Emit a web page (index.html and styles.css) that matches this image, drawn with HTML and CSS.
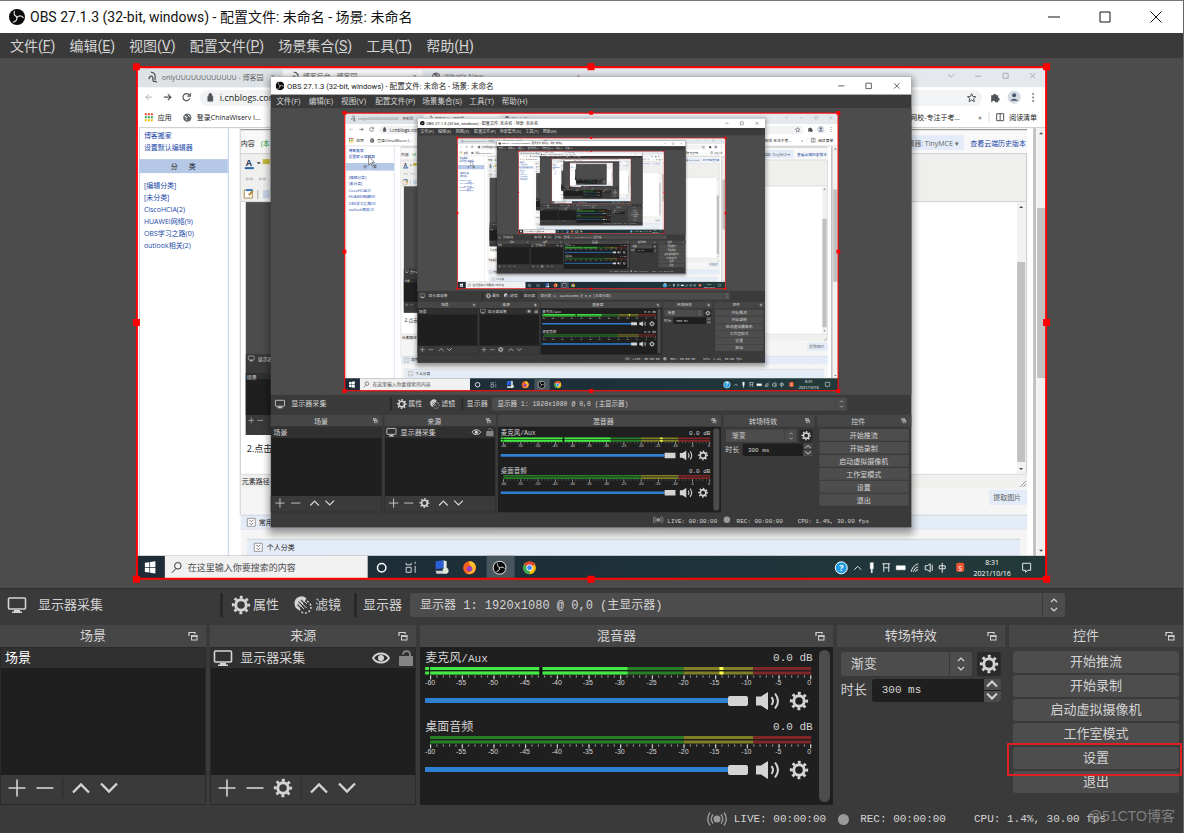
FILE: index.html
```html
<!DOCTYPE html>
<html lang="zh-CN">
<head>
<meta charset="utf-8">
<title>OBS 27.1.3 (32-bit, windows)</title>
<link rel="stylesheet" href="styles.css">
</head>
<body>
<svg class="defs" aria-hidden="true">
  <defs>
    <symbol id="i-obs" viewBox="0 0 24 24">
      <circle cx="12" cy="12" r="12" fill="#0b0b0b"/>
      <g fill="none" stroke="#e0e0e0" stroke-width="1.700" stroke-linecap="round">
        <path d="M8 3.5c-1 4 .5 7 4.300 8.200"/>
        <path d="M8 3.5c-1 4 .5 7 4.300 8.200" transform="rotate(120 12 12)"/>
        <path d="M8 3.5c-1 4 .5 7 4.300 8.200" transform="rotate(240 12 12)"/>
      </g>
    </symbol>
    <symbol id="i-gear" viewBox="0 0 24 24">
      <circle cx="12" cy="12" r="6.300" fill="none" stroke="currentColor" stroke-width="3.600"/>
      <circle cx="12" cy="12" r="9.200" fill="none" stroke="currentColor" stroke-width="3.600" stroke-dasharray="3.300 3.926" transform="rotate(-10 12 12)"/>
    </symbol>
    <symbol id="i-monitor" viewBox="0 0 20 18">
      <rect x="1.500" y="2" width="17" height="11" rx="1" fill="none" stroke="currentColor" stroke-width="1.600"/>
      <path d="M7 14h6v1.500h2V17H5v-1.500h2z" fill="currentColor"/>
    </symbol>
    <symbol id="i-filter" viewBox="0 0 20 20">
      <path d="M1.500 9a7 7 0 0 1 12-5.500L6 15a7 7 0 0 1-4.500-6z" fill="currentColor"/>
      <circle cx="12" cy="12" r="6" fill="none" stroke="currentColor" stroke-width="1.600" stroke-dasharray="1.800 1.900"/>
      <path d="M5.500 6.500l7 7M8 5l7 7M4.500 9.500l5 5" stroke="#3a3a3a" stroke-width="1.100"/>
      <path d="M6.500 6l7 7M5 8l6 6M10 5l4 4" stroke="currentColor" stroke-width="1"/>
    </symbol>
    <symbol id="i-plus" viewBox="0 0 20 20"><path d="M10 1.500v17M1.500 10h17" stroke="currentColor" stroke-width="1.600"/></symbol>
    <symbol id="i-minus" viewBox="0 0 20 20"><path d="M1.500 10h17" stroke="currentColor" stroke-width="1.600"/></symbol>
    <symbol id="i-up" viewBox="0 0 20 20"><path d="M2 14.500l8-8 8 8" fill="none" stroke="currentColor" stroke-width="2.400"/></symbol>
    <symbol id="i-down" viewBox="0 0 20 20"><path d="M2 5.500l8 8 8-8" fill="none" stroke="currentColor" stroke-width="2.400"/></symbol>
    <symbol id="i-updown" viewBox="0 0 10 16"><path d="M2 5l3-3 3 3M2 11l3 3 3-3" fill="none" stroke="currentColor" stroke-width="1.200"/></symbol>
    <symbol id="i-float" viewBox="0 0 10 10">
      <path d="M1 5V1.500h6V3M1 1.500h6" fill="none" stroke="currentColor" stroke-width="1.200"/>
      <rect x="3.500" y="5" width="5.500" height="4" fill="none" stroke="currentColor"/>
      <path d="M3 5h6.500" stroke="currentColor" stroke-width="1.600"/>
    </symbol>
    <symbol id="i-eye" viewBox="0 0 18 12">
      <path d="M1 6c3.500-6 12.500-6 16 0-3.500 6-12.500 6-16 0z" fill="none" stroke="currentColor" stroke-width="1.800"/>
      <circle cx="9" cy="6" r="3" fill="currentColor"/>
    </symbol>
    <symbol id="i-lock" viewBox="0 0 14 16">
      <rect x="0" y="6" width="14" height="10" rx="1" fill="currentColor"/>
      <path d="M4 4.500c0-4.500 7-4.500 7 0V8" fill="none" stroke="currentColor" stroke-width="1.800"/>
    </symbol>
    <symbol id="i-speaker" viewBox="0 0 26 20">
      <path d="M1 5.500h5L13 1v18l-7-4.500H1z" fill="currentColor"/>
      <path d="M16.500 6q3 4 0 8M20 2.500q6 7.500 0 15" fill="none" stroke="currentColor" stroke-width="2"/>
    </symbol>
    <symbol id="i-live" viewBox="0 0 20 16">
      <circle cx="10" cy="8" r="3.500" fill="currentColor"/>
      <path d="M6 3.500q-3.500 4.500 0 9M14 3.500q3.500 4.500 0 9M3 1.500q-4.500 6.500 0 13M17 1.500q4.500 6.500 0 13" fill="none" stroke="currentColor" stroke-width="1.400"/>
    </symbol>
    <symbol id="i-chrome" viewBox="0 0 24 24">
      <circle cx="12" cy="12" r="11" fill="#fbbc05"/>
      <path d="M12 12L2.500 6.500A11 11 0 0 1 21.500 6.500z" fill="#ea4335"/>
      <path d="M12 12L2.500 6.500A11 11 0 0 0 12 23z" fill="#34a853"/>
      <circle cx="12" cy="12" r="5.500" fill="#fff"/><circle cx="12" cy="12" r="4.200" fill="#4285f4"/>
    </symbol>
    <symbol id="i-globe" viewBox="0 0 12 12">
      <circle cx="6" cy="6" r="5.500" fill="#5f6368"/><path d="M2 4l3 1-1 2 2 2M7 2l1 2 2 1" fill="none" stroke="#fff" stroke-width="1.200"/>
    </symbol>
    <linearGradient id="taskbar"><stop offset="0" stop-color="#1f2c38"/><stop offset=".5" stop-color="#1d303a"/><stop offset="1" stop-color="#233a3a"/></linearGradient>
    <filter id="soft" x="-10%" y="-10%" width="120%" height="120%"><feGaussianBlur stdDeviation="7"/></filter>

    <g id="meter">
      <path d="M5 1.500h254M5 6h254" stroke="#267f26" stroke-width="3"/>
      <path d="M259 1.500h70M259 6h70" stroke="#7f7f26" stroke-width="3"/>
      <path d="M329 1.500h58M329 6h58" stroke="#7f2626" stroke-width="3"/>
      <path d="M5 9.500h383" stroke="#aaa" stroke-width="2" stroke-dasharray="1 5.350"/>
      <path d="M5 10.500h383" stroke="#ddd" stroke-width="4" stroke-dasharray="1 30.750"/>
      <g class="tick-label">
        <text x="5" y="18">-60</text><text x="36" y="18">-55</text><text x="68" y="18">-50</text><text x="100" y="18">-45</text><text x="132" y="18">-40</text><text x="163" y="18">-35</text><text x="195" y="18">-30</text><text x="227" y="18">-25</text><text x="259" y="18">-20</text><text x="290" y="18">-15</text><text x="322" y="18">-10</text><text x="354" y="18">-5</text><text x="385" y="18">0</text>
      </g>
    </g>
    <g id="meter-live">
      <use href="#meter"/>
      <path d="M0 1.500h203M0 6h203" stroke="#43e843" stroke-width="3"/>
      <path d="M4.500 0v8M116 0v8" stroke="#0c1c0c"/>
      <path d="M116 0v8" stroke="#0c0c0c" stroke-width="3"/>
      <path d="M297 0v3M297 4.500v3" stroke="#ffff4c" stroke-width="4"/>
    </g>

    <g id="obs-window">
      <rect x="-4" y="0" width="1192" height="846" fill="#000" opacity=".35" filter="url(#soft)"/>
      <rect width="1184" height="833" fill="#3a3a3a"/>
      <rect width="1184" height="33" fill="#fff"/>
      <use href="#i-obs" x="9" y="9" width="16" height="16"/>
      <text class="ui dark" x="30" y="22">OBS 27.1.3 (32-bit, windows) - 配置文件: 未命名 - 场景: 未命名</text>
      <path d="M1049 17h11M1100 12h10v10h-10zM1152 12l10 10M1162 12l-10 10" fill="none" stroke="#222" stroke-width="1.300"/>
      <g class="ui light"><text x="10" y="50">文件(F)</text><text x="70" y="50">编辑(E)</text><text x="130" y="50">视图(V)</text><text x="193" y="50">配置文件(P)</text><text x="280" y="50">场景集合(S)</text><text x="367" y="50">工具(T)</text><text x="427" y="50">帮助(H)</text></g>
      <rect y="58" width="1184" height="530" fill="#4c4c4c"/>
      <g class="sim light">
        <use href="#i-monitor" x="7" y="596" width="20" height="18"/><text x="38" y="609">显示器采集</text>
        <path d="M222 593v24M354 593v24" stroke="#262626" stroke-width="3"/>
        <use href="#i-gear" x="232" y="595" width="20" height="20"/><text x="254" y="609">属性</text>
        <use href="#i-filter" x="293" y="595" width="20" height="20"/><text x="315" y="609">滤镜</text>
        <text x="362" y="609">显示器</text>
        <rect x="409" y="593" width="656" height="24" rx="3" fill="#4c4c4c"/><path d="M1043 593v24" stroke="#3a3a3a"/>
        <text class="mono12" x="419" y="609">显示器 1: 1920x1080 @ 0,0 (主显示器)</text>
        <use href="#i-updown" x="1050" y="597" width="10" height="16"/>
        <path d="M0 625h206v22H0zM210 625h206v22H210zM420 625h412v22H420zM837 625h168v22H837zM1010 625h174v22h-174z" fill="#464646"/>
        <path d="M1 647h204v128H1zM211 647h204v128H211zM420 647h412v158H420z" fill="#1f1f1f"/>
        <path d="M1 647h204v21H1zM211 647h204v21H211z" fill="#303030"/>
        <path d="M.5 775v29.500h205V775M210.500 775v29.500h205V775" fill="none" stroke="#2a2a2a"/>
        <text x="80" y="641">场景</text><text x="289" y="641">来源</text><text x="595" y="641">混音器</text><text x="884" y="641">转场特效</text><text x="1073" y="641">控件</text>
        <use href="#i-float" x="188" y="631" width="10" height="10"/><use href="#i-float" x="397" y="631" width="10" height="10"/><use href="#i-float" x="814" y="631" width="10" height="10"/><use href="#i-float" x="987" y="631" width="10" height="10"/><use href="#i-float" x="1165" y="631" width="10" height="10"/>
        <text x="5" y="663">场景</text><use href="#i-monitor" x="213" y="648" width="20" height="18"/><text x="240" y="662">显示器采集</text>
        <use href="#i-eye" x="371" y="651" width="18" height="12"/><use href="#i-lock" x="398" y="649" width="14" height="16" color="#858585"/>
        <use href="#i-plus" x="7" y="778" width="20" height="20"/><use href="#i-minus" x="36" y="778" width="20" height="20"/><use href="#i-up" x="71" y="778" width="20" height="20"/><use href="#i-down" x="99" y="778" width="20" height="20"/>
        <use href="#i-plus" x="217" y="778" width="20" height="20"/><use href="#i-minus" x="245" y="778" width="20" height="20"/><use href="#i-gear" x="274" y="778" width="20" height="20"/><use href="#i-up" x="309" y="778" width="20" height="20"/><use href="#i-down" x="337" y="778" width="20" height="20"/>
        <text class="mono12" x="425" y="663">麦克风/Aux</text><text class="mono12" x="425" y="732">桌面音频</text>
        <text class="mono11" x="773" y="663">0.0 dB</text><text class="mono11" x="773" y="732">0.0 dB</text>
        <use href="#meter-live" x="425" y="667"/><use href="#meter" x="425" y="736"/>
        <path d="M425 700h303M425 769h303" stroke="#2d80d2" stroke-width="5"/>
        <path d="M728 695h20v10h-20zM728 764h20v10h-20z" fill="#d4d4d4"/>
        <use href="#i-speaker" x="755" y="690" width="26" height="20"/><use href="#i-gear" x="789" y="690" width="20" height="20"/>
        <use href="#i-speaker" x="755" y="759" width="26" height="20"/><use href="#i-gear" x="789" y="759" width="20" height="20"/>
        <rect x="818" y="650" width="11" height="152" rx="5" fill="#4c4c4c"/>
        <rect x="841" y="652" width="131" height="23" rx="3" fill="#4c4c4c"/><path d="M950 652v23" stroke="#3a3a3a"/><text x="852" y="668">渐变</text>
        <use href="#i-updown" x="957" y="656" width="10" height="16"/><rect x="977" y="652" width="24" height="24" rx="3" fill="#2a2a2a"/><use href="#i-gear" x="980" y="654" width="19" height="19"/>
        <text x="840" y="694">时长</text><rect x="872" y="678" width="129" height="23" rx="3" fill="#1f1f1f"/><text class="mono11" x="882" y="693">300 ms</text>
        <path d="M984 678h17v11h-17zM984 690h17v11h-17z" fill="#4c4c4c"/><path d="M988 686l5-4 5 4M988 693l5 4 5-4" fill="none" stroke="#d4d4d4" stroke-width="1.600"/>
        <path d="M1014 651h165v22h-165zM1014 675h165v22h-165zM1014 699h165v22h-165zM1014 723h165v22h-165zM1014 747h165v22h-165zM1014 771h165v22h-165z" fill="#4d4d4d"/>
        <g text-anchor="middle"><text x="1096" y="667">开始推流</text><text x="1096" y="691">开始录制</text><text x="1096" y="715">启动虚拟摄像机</text><text x="1096" y="739">工作室模式</text><text x="1096" y="763">设置</text><text x="1096" y="787">退出</text></g>
        <use href="#i-live" x="706" y="811" width="20" height="16" color="#9a9a9a"/><text class="mono11" x="733" y="824">LIVE: 00:00:00</text>
        <circle cx="843" cy="819" r="6" fill="#9a9a9a"/><text class="mono11" x="861" y="824">REC: 00:00:00</text><text class="mono11" x="974" y="824">CPU: 1.4%, 30.00 fps</text>
      </g>
    </g>

    <g id="desktop">
      <rect x="137" y="67" width="910" height="512" fill="#fff"/>
      <rect x="137" y="67" width="910" height="20" fill="#e5e8ec"/>
      <rect x="137" y="68" width="145" height="19" fill="#dde2e6"/>
      <rect x="283" y="70" width="140" height="17" rx="3" fill="#f5f7f8"/>
      <g class="web grey"><path d="M149 79c1-4 4-4 4 0s2 1 4 3M151 72c4 0 5 3 4 8" fill="none" stroke="#555" stroke-width="1.300"/><text x="162" y="80">onlyUUUUUUUUUUUU - 博客园</text><text x="303" y="79">博客后台 - 博客园</text><text x="445" y="79">What's New</text><text x="271" y="79">×</text><text x="413" y="79">×</text><text x="577" y="79">+</text><use href="#i-globe" x="432" y="72" width="9" height="9"/><path d="M292 79c1-4 4-4 4 0s2 1 4 3M294 72c4 0 5 3 4 8" fill="none" stroke="#555" stroke-width="1.300"/></g>
      <path d="M949 74l3 3 3-3M976 76h6M1004 73h5v5h-5zM1031 73l5 5M1036 73l-5 5" fill="none" stroke="#a8adb2"/>
      <rect x="200" y="90" width="783" height="16" rx="8" fill="#f1f3f4"/>
      <path d="M152 97h-6M149 94l-3 3 3 3" fill="none" stroke="#b0b3b6"/>
      <path d="M164 97h7M168 94l3 3-3 3M189.500 95a3.500 3.500 0 1 0 .5 3M190.500 93v3h-3" fill="none" stroke="#50545a" stroke-width="1.200"/>
      <path d="M208 96h5v5h-5zM209 96v-2q1.500-2 3 0v2" fill="#50545a" stroke="#50545a" stroke-width=".6"/>
      <text class="web dark url" x="220" y="101">i.cnblogs.com</text>
      <path d="M972.500 93.500l1.200 2.800 3 .2-2.300 2 .8 3-2.700-1.600-2.600 1.600.7-3-2.300-2 3-.2z" fill="none" stroke="#50545a"/>
      <path d="M992 95h2a1.500 1.500 0 0 1 3 0h2v2.500a1.500 1.500 0 0 1 0 3v1.500h-3a1.500 1.500 0 0 0-3 0h-1z" fill="#50545a"/>
      <circle cx="1015" cy="97" r="6.500" fill="#d5dbe3"/><circle cx="1015" cy="95" r="2" fill="#46566b"/><path d="M1011 100.500q4-4 8 0z" fill="#46566b"/>
      <path d="M1034 93v9" stroke="#50545a" stroke-width="1.500" stroke-dasharray="1.500 2"/>
      <path d="M145 114h8" stroke="#ea4335" stroke-width="2" stroke-dasharray="2 1"/><path d="M145 117h8" stroke="#34a853" stroke-width="2" stroke-dasharray="2 1"/><path d="M145 120h8" stroke="#fbbc05" stroke-width="2" stroke-dasharray="2 1"/>
      <use href="#i-globe" x="183" y="113" width="9" height="9"/>
      <g class="web dark"><text x="158" y="120">应用</text><text x="197" y="120">登录ChinaWiserv I...</text><text x="911" y="120">网校-专注于考...</text><text x="979" y="120">»</text><text x="1010" y="120">阅读清单</text></g>
      <path d="M990 112v10" stroke="#ddd"/><path d="M997.500 113.500h7v7h-7zM1001 113v7" fill="none" stroke="#50545a"/>
      <path d="M139 127.500h908" stroke="#c9c9c9"/>
      <path d="M139.500 128v428M240.500 128v387" stroke="#c8c8c8"/><path d="M228.500 128v428" stroke="#bccfe9"/>
      <rect x="139" y="159" width="89" height="14" fill="#b5c8e6"/>
      <g class="web link"><text x="144" y="138">博客搬家</text><text x="144" y="150">设置默认编辑器</text><text x="144" y="188">[编辑分类]</text><text x="144" y="200">[未分类]</text><text x="144" y="212">CiscoHCIA(2)</text><text x="144" y="224">HUAWEI网络(9)</text><text x="144" y="236">OBS学习之路(0)</text><text x="144" y="248">outlook相关(2)</text></g>
      <g class="web dark"><text x="171" y="169">分</text><text x="189" y="169">类</text></g>
      <rect x="241" y="128" width="787" height="25" fill="#f8f8f8"/>
      <path d="M241 129.500h787" stroke="#888"/>
      <rect x="241" y="153" width="787" height="49" fill="#efefee"/><path d="M241 153.500h787M241 201.500h787" stroke="#d2d2d2"/>
      <text class="web dark" x="241" y="146">内容</text><text class="web" x="261" y="146" fill="#2c9a3c">(本</text>
      <rect x="900" y="135" width="65" height="15" fill="#e3ecf8"/><text class="web grey" x="901" y="146">编辑器: TinyMCE ▾</text><text class="web link" x="971" y="146">查看云端历史版本</text>
      <text class="web nine" x="246" y="166" font-weight="bold" fill="#34496a">A</text><path d="M245 168h9" stroke="#2a62a8" stroke-width="2"/><path d="M257 162h4l-2 2z" fill="#333"/><path d="M263 159h7v5h-7z" fill="#c5b93b"/>
      <path d="M246 179h8M259 179h8" stroke="#bfc2c7" stroke-width="2.500" stroke-dasharray="3 1"/><path d="M244.500 190h8v8h-8z" fill="#fff" stroke="#a98d54"/><path d="M246 190h7" stroke="#3a78c0" stroke-width="2"/><path d="M249 195l4-4" stroke="#b8862b" stroke-width="2"/><path d="M258 190v9" stroke="#aaa"/><path d="M263 190h7v8h-7z" fill="#c8d5e8"/>
      <rect x="246" y="202" width="400" height="233" fill="#4c4c4c"/><rect x="246" y="354" width="400" height="81" fill="#3a3a3a"/><path d="M246 379h200v36H246z" fill="#1f1f1f"/><path d="M246 373h200v6H246z" fill="#303030"/>
      <g class="light"><use href="#i-monitor" x="248" y="355" width="7" height="7"/><text class="nano" x="258" y="361">显示器</text><text class="nano" x="247" y="379">场景</text><use href="#i-plus" x="248" y="417" width="7" height="7"/><use href="#i-minus" x="257" y="417" width="7" height="7"/></g>
      <path d="M1018 202h9v272h-9zM1038 128h8v428h-8z" fill="#f1f1f1"/><path d="M1018 262h8v200h-8zM1034 128h3v428h-3zM1038 208h8v170h-8z" fill="#c1c1c1"/>
      <path d="M1027.500 153v321" stroke="#ccc"/><path d="M1020 208h4l-2-2zM1020 468h4l-2 2zM1040 134h4l-2-2zM1040 550h4l-2 2z" fill="#444"/>
      <text class="web dark nine" x="247" y="452">2.点击</text>
      <rect x="241" y="474" width="787" height="14" fill="#f0f0ee"/><path d="M241 474.500h787" stroke="#ddd"/><text class="web dark" x="242" y="484">元素路径</text><path d="M1021 487l6-6M1024 487l3-3" stroke="#999"/>
      <rect x="241" y="488" width="787" height="68" fill="#f5f5f5"/>
      <rect x="990" y="490" width="38" height="15" fill="#e3ecf8"/><text class="web grey" x="994" y="500">提取图片</text>
      <path d="M241 515h787v14H241zM247 540h774v15H247z" fill="#e4ecf7"/><path d="M241 515.500h787M247 539.500h774" stroke="#cfd6df"/><path d="M241 529.500h787M247 555.500h774" stroke="#cfd6df" stroke-dasharray="1 1"/>
      <path d="M247.500 518.500h8v8h-8zM254.500 543.500h8v8h-8z" fill="#fff" stroke="#999"/><path d="M249.500 520l2 2 2-2M249.500 523l2 2 2-2M256.500 545l2 2 2-2M256.500 548l2 2 2-2" fill="none" stroke="#777"/>
      <text class="web dark" x="259" y="525">常用</text><text class="web dark" x="267" y="550">个人分类</text>
      <rect x="137" y="556" width="910" height="23" fill="url(#taskbar)"/>
      <path d="M145 563l4.500-.6v4.800H145zM150.200 562.300l5.300-.8v5.700h-5.300zM145 568h4.500v4.800l-4.500-.6zM150.200 568h5.300v5.700l-5.300-.8z" fill="#fff"/>
      <rect x="165" y="556" width="203" height="23" fill="#f1f1f1"/><circle cx="178" cy="566" r="3.300" fill="none" stroke="#333"/><path d="M176 569l-4 4" stroke="#333"/>
      <text class="web nine" x="188" y="571" fill="#4b4b4b">在这里输入你要搜索的内容</text>
      <circle cx="382" cy="568" r="4.200" fill="none" stroke="#fff" stroke-width="1.500"/><path d="M406.500 563v2M406.500 567.500h5v5h-5zM411.500 563v2h-5M415.500 562v2M415.500 566v7" fill="none" stroke="#d4d4d4"/>
      <path d="M436 561.500l8-1v8l-8 1z" fill="#2b5fd8"/><path d="M444 560.500l3 1v7l-3 0z" fill="#dfe5ea"/><path d="M436 571h10v3h-9z" fill="#c9d3dc"/><circle cx="446" cy="571" r="3" fill="#dcebd8"/>
      <circle cx="470" cy="568" r="6.500" fill="#f2621f"/><path d="M469 562c4-2 8 3 7 7-1 5-7 6-10 4 5 1 8-4 5-6z" fill="#fdbf2d"/><circle cx="470" cy="569" r="2.800" fill="#9a3ec4"/>
      <rect x="487" y="556" width="28" height="22" fill="#48555d"/><circle cx="500" cy="568" r="7" fill="#c8c8c8"/><use href="#i-obs" x="494" y="562" width="12" height="12"/><use href="#i-chrome" x="523" y="561" width="14" height="14"/>
      <circle cx="842" cy="568" r="6" fill="#1e9be2" stroke="#fff"/><text class="web nine" x="840" y="571" font-weight="bold" fill="#fff">?</text>
      <path d="M855 570l3.500-3.500 3.500 3.500M884.500 564v8M889.500 564v8M883 564h8M885 568h5M912 572q1-6 7-8M914 572q1-4 5-5M916 572q0-2 3-2M926 566h2l3-2v8l-3-2h-2zM933 565v6M940 566h6v3h-6zM943 563v10M1023.500 563.500h8v7h-3l-2 2v-2h-3z" fill="none" stroke="#e5e8e8"/>
      <path d="M871 563h3v6h-3zM872 569h1v4h-1zM897 566h9v4h-9z" fill="#fff" stroke="#fff" stroke-width=".5"/>
      <rect x="957" y="563" width="8" height="9" rx="2" fill="#ee5532"/><text class="web" x="959" y="571" fill="#fff">S</text>
      <text class="web" x="993" y="565" fill="#fff" text-anchor="middle">8:31</text><text class="web" x="993" y="576" fill="#fff" text-anchor="middle">2021/10/16</text>
      <use href="#obs-window" transform="translate(271 76.500) scale(.5415)"/>
    </g>
    <g id="frame">
      <rect x="137" y="67" width="910" height="512" fill="none" stroke="#f00" stroke-width="2"/>
      <path d="M133 63h7v7h-7zM588 63h7v7h-7zM1044 63h7v7h-7zM133 319h7v7h-7zM1044 319h7v7h-7zM133 576h7v7h-7zM588 576h7v7h-7zM1044 576h7v7h-7z" fill="#f00"/>
    </g>
    <path id="cursor" d="M181 146v17l4-4 3 6 2-1-3-6h5z" fill="#fff" stroke="#333"/>
    <g id="level6"><use href="#desktop"/><use href="#frame"/></g>
    <g id="level5"><use href="#desktop"/><use href="#level6" transform="translate(270.700 76.600) scale(.5426)"/><use href="#frame"/></g>
    <g id="level4"><use href="#desktop"/><use href="#level5" transform="translate(270.700 76.600) scale(.5426)"/><use href="#frame"/></g>
    <g id="level3"><use href="#desktop"/><use href="#cursor"/><use href="#level4" transform="translate(270.700 76.600) scale(.5426)"/><use href="#frame"/></g>
    <g id="level2"><use href="#desktop"/><use href="#cursor"/><use href="#level3" transform="translate(270.700 76.600) scale(.5426)"/><use href="#frame"/></g>
  </defs>
</svg>

<div class="app">
  <header class="titlebar">
    <svg class="logo"><use href="#i-obs"/></svg>
    <h1 class="title">OBS 27.1.3 (32-bit, windows) - 配置文件: 未命名 - 场景: 未命名</h1>
    <button class="winbtn" aria-label="最小化"><svg viewBox="0 0 12 12"><path d="M0 6h12"/></svg></button>
    <button class="winbtn" aria-label="最大化"><svg viewBox="0 0 12 12"><path d="M1 1h10v10H1z"/></svg></button>
    <button class="winbtn" aria-label="关闭"><svg viewBox="0 0 12 12"><path d="M.5.5l11 11M11.500.5l-11 11"/></svg></button>
  </header>
  <nav class="menubar">
    <button>文件(<u>F</u>)</button><button>编辑(<u>E</u>)</button><button>视图(<u>V</u>)</button><button>配置文件(<u>P</u>)</button><button>场景集合(<u>S</u>)</button><button>工具(<u>T</u>)</button><button>帮助(<u>H</u>)</button>
  </nav>

  <main class="preview">
    <svg viewBox="0 58 1184 530" role="img" aria-label="显示器采集预览">
      <use href="#desktop"/>
      <use href="#level2" transform="translate(270.700 76.600) scale(.5426)"/>
      <use href="#frame"/>
    </svg>
  </main>

  <section class="context">
    <div class="context-source"><svg class="monitor"><use href="#i-monitor"/></svg><span>显示器采集</span></div>
    <button class="context-btn"><svg class="icon"><use href="#i-gear"/></svg>属性</button>
    <button class="context-btn"><svg class="icon"><use href="#i-filter"/></svg>滤镜</button>
    <label class="context-label" for="display">显示器</label>
    <div class="combo">
      <select id="display"><option>显示器 1: 1920x1080 @ 0,0 (主显示器)</option></select>
      <svg class="combo-arrows"><use href="#i-updown"/></svg>
    </div>
  </section>

  <div class="docks">
    <section class="dock">
      <header class="dock-head"><h2>场景</h2><button aria-label="浮动"><svg><use href="#i-float"/></svg></button></header>
      <div class="pane">
        <ul class="list"><li>场景</li></ul>
        <div class="tools">
          <button aria-label="添加"><svg class="icon"><use href="#i-plus"/></svg></button>
          <button aria-label="移除"><svg class="icon"><use href="#i-minus"/></svg></button>
          <i class="sep"></i>
          <button aria-label="上移"><svg class="icon"><use href="#i-up"/></svg></button>
          <button aria-label="下移"><svg class="icon"><use href="#i-down"/></svg></button>
        </div>
      </div>
    </section>

    <section class="dock">
      <header class="dock-head"><h2>来源</h2><button aria-label="浮动"><svg><use href="#i-float"/></svg></button></header>
      <div class="pane">
        <ul class="list"><li class="source"><svg class="monitor"><use href="#i-monitor"/></svg><span>显示器采集</span><svg class="eye"><use href="#i-eye"/></svg><svg class="lock"><use href="#i-lock"/></svg></li></ul>
        <div class="tools">
          <button aria-label="添加"><svg class="icon"><use href="#i-plus"/></svg></button>
          <button aria-label="移除"><svg class="icon"><use href="#i-minus"/></svg></button>
          <button aria-label="属性"><svg class="icon"><use href="#i-gear"/></svg></button>
          <i class="sep"></i>
          <button aria-label="上移"><svg class="icon"><use href="#i-up"/></svg></button>
          <button aria-label="下移"><svg class="icon"><use href="#i-down"/></svg></button>
        </div>
      </div>
    </section>

    <section class="dock">
      <header class="dock-head"><h2>混音器</h2><button aria-label="浮动"><svg><use href="#i-float"/></svg></button></header>
      <div class="mixer">
        <div class="channels">
          <div class="channel">
            <div class="channel-name"><label for="mic">麦克风<span class="latin">/Aux</span></label><span class="latin">0.0 dB</span></div>
            <svg class="meter" viewBox="0 0 388 20"><use href="#meter-live"/></svg>
            <div class="channel-ctl"><input id="mic" type="range" value="100"><button aria-label="静音"><svg class="speaker"><use href="#i-speaker"/></svg></button><button aria-label="设置"><svg class="icon"><use href="#i-gear"/></svg></button></div>
          </div>
          <div class="channel">
            <div class="channel-name"><label for="desk">桌面音频</label><span class="latin">0.0 dB</span></div>
            <svg class="meter" viewBox="0 0 388 20"><use href="#meter"/></svg>
            <div class="channel-ctl"><input id="desk" type="range" value="100"><button aria-label="静音"><svg class="speaker"><use href="#i-speaker"/></svg></button><button aria-label="设置"><svg class="icon"><use href="#i-gear"/></svg></button></div>
          </div>
        </div>
        <div class="scroll"></div>
      </div>
    </section>

    <section class="dock">
      <header class="dock-head"><h2>转场特效</h2><button aria-label="浮动"><svg><use href="#i-float"/></svg></button></header>
      <div class="transitions">
        <div class="trans-row">
          <div class="combo">
            <select class="cjk" aria-label="转场特效"><option>渐变</option></select>
            <svg class="combo-arrows"><use href="#i-updown"/></svg>
          </div>
          <button class="trans-gear" aria-label="转场设置"><svg class="icon"><use href="#i-gear"/></svg></button>
        </div>
        <div class="trans-row">
          <label for="duration">时长</label>
          <div class="spin">
            <input id="duration" type="text" value="300 ms">
            <div class="spin-btns"><button aria-label="增加"><svg viewBox="0 0 12 8"><path d="M1 6.500l5-5 5 5"/></svg></button><button aria-label="减少"><svg viewBox="0 0 12 8"><path d="M1 1.500l5 5 5-5"/></svg></button></div>
          </div>
        </div>
      </div>
    </section>

    <section class="dock">
      <header class="dock-head"><h2>控件</h2><button aria-label="浮动"><svg><use href="#i-float"/></svg></button></header>
      <div class="controls">
        <button>开始推流</button><button>开始录制</button><button>启动虚拟摄像机</button><button>工作室模式</button><button class="marked">设置</button><button>退出</button>
      </div>
    </section>
  </div>

  <footer class="status latin">
    <span class="status-item"><svg class="live"><use href="#i-live"/></svg>LIVE: 00:00:00</span>
    <span class="status-item"><i class="dot"></i>REC: 00:00:00</span>
    <span class="status-item">CPU: 1.4%, 30.00 fps</span>
    <span class="watermark">@51CTO博客</span>
  </footer>
</div>
</body>
</html>
```

FILE: styles.css
```css
* { box-sizing: border-box; }

body { margin: 0; background: #3a3a3a; color: #d4d4d4; font: 13px/16px "Liberation Sans", "Noto Sans CJK SC", sans-serif; }
button, select, input { font: inherit; color: inherit; border: 0; padding: 0; margin: 0; background: none; outline: 0; }
h1, h2 { margin: 0; font: inherit; }
ul { margin: 0; padding: 0; list-style: none; }
svg { display: block; flex: none; }

.defs { position: absolute; width: 0; height: 0; }
.app { display: flex; flex-direction: column; height: 100vh; min-height: 600px; border-top: 1px solid #777; border-right: 1px solid #666; overflow: hidden; }
.icon { width: 20px; height: 20px; }
.latin { font: 11px/16px "Liberation Mono", "Noto Sans CJK SC", monospace; }

.titlebar { display: flex; align-items: center; height: 32px; padding: 0 2px 0 9px; background: #fff; color: #111; }
.logo { width: 16px; height: 16px; margin-right: 5px; }
.title { flex: 1; font: 14px/20px Roboto, "Noto Sans CJK SC", sans-serif; }
.winbtn { width: 51px; height: 32px; display: grid; place-items: center; }
.winbtn svg { width: 12px; height: 12px; fill: none; stroke: #111; }

.menubar { display: flex; gap: 14px; height: 25px; padding-left: 10px; font: 14px/24px Roboto, "Noto Sans CJK SC", sans-serif; }

.preview { flex: 1; min-height: 0; background: #4c4c4c; }
.preview svg { width: 100%; height: 100%; }
.ui { font: 14px Roboto, "Noto Sans CJK SC", sans-serif; }
.sim { font: 13px "Liberation Sans", "Noto Sans CJK SC", sans-serif; }
.mono12 { font: 12px "Liberation Mono", "Noto Sans CJK SC", monospace; }
.mono11 { font: 11px "Liberation Mono", monospace; }
.web { font-family: "Open Sans", "Noto Sans CJK SC", sans-serif; font-size: 7px; }
.web.url, .web.nine { font-size: 9px; }
.nano { font: 5px "Noto Sans CJK SC", sans-serif; }
.light { fill: #d4d4d4; color: #d4d4d4; }
.dark { fill: #222; }
.grey { fill: #666; }
.link { fill: #2148a8; }
.tick-label { font: 7px "Liberation Sans", sans-serif; fill: #d4d4d4; text-anchor: middle; }

.context { display: flex; align-items: center; height: 37px; padding: 0 118px 4px 7px; border-top: 1px solid #303030; }
.context-source { display: flex; align-items: center; gap: 11px; width: 216px; height: 24px; border-right: 3px solid #282828; }
.monitor { width: 20px; height: 18px; }
.context-btn { display: flex; align-items: center; gap: 2px; height: 24px; margin-left: 8px; }
.context-btn + .context-btn { margin-left: 14px; padding-right: 13px; border-right: 3px solid #282828; }
.context-label { margin: 0 8px 0 6px; }
.combo { position: relative; flex: 1; height: 24px; }
.combo select { appearance: none; width: 100%; height: 100%; padding: 1px 10px 0; border-radius: 3px; background: linear-gradient(#3a3a3a, #3a3a3a) right 22px top / 1px 100% no-repeat #4c4c4c; font: 12px/22px "Liberation Mono", "Noto Sans CJK SC", monospace; }
.combo select.cjk { font-size: 13px; }
.combo-arrows { position: absolute; right: 6px; top: 4px; width: 10px; height: 16px; pointer-events: none; }

.docks { display: grid; grid-template-columns: 206fr 206fr 412fr 168fr 174fr; gap: 4px; height: 180px; }
.dock { display: flex; flex-direction: column; min-width: 0; }
.dock-head { display: flex; align-items: center; height: 22px; padding-right: 6px; background: #464646; }
.dock-head h2 { flex: 1; text-align: center; }
.dock-head button { width: 14px; height: 14px; }
.dock-head svg { width: 10px; height: 10px; margin: auto; }
.pane { flex: 1; display: flex; flex-direction: column; border: 1px solid #2a2a2a; }
.list { flex: 1; background: #1f1f1f; }
.list li { height: 20px; padding: 2px 4px; background: #303030; color: #fff; }
.list .source { display: flex; align-items: center; padding: 0 2px; color: #d4d4d4; }
.source span { flex: 1; margin-left: 7px; }
.eye { width: 18px; height: 12px; margin-right: 9px; }
.lock { width: 14px; height: 16px; color: #858585; }
.tools { display: flex; align-items: center; height: 29px; padding: 0 2px 4px; }
.tools button { width: 28px; height: 24px; display: grid; place-items: center; }
.sep { width: 2px; height: 20px; margin: 0 3px; background: #333; }

.mixer { flex: 1; display: flex; padding: 3px 3px 3px 5px; gap: 6px; background: #1f1f1f; }
.channels { flex: 1; min-width: 0; display: flex; flex-direction: column; gap: 4px; }
.channel-name { display: flex; justify-content: space-between; height: 17px; font-size: 12px; }
.meter { width: 100%; }
.channel-ctl { display: flex; align-items: center; gap: 8px; height: 28px; padding-right: 4px; }
.channel-ctl input { appearance: none; flex: 1; min-width: 0; height: 11px; margin-right: -1px; background: linear-gradient(#2d80d2, #2d80d2) left center / 100% 5px no-repeat; border-radius: 3px; }
.channel-ctl input::-webkit-slider-thumb { appearance: none; width: 20px; height: 10px; border-radius: 2px; background: #d4d4d4; }
.speaker { width: 26px; height: 20px; }
.scroll { width: 11px; border-radius: 6px; background: #4c4c4c; }

.transitions { display: flex; flex-direction: column; gap: 2px; padding: 5px 4px; }
.trans-row { display: flex; align-items: center; gap: 5px; height: 24px; }
.trans-gear { display: grid; place-items: center; width: 24px; height: 24px; border-radius: 3px; background: #2a2a2a; }
.spin { flex: 1; display: flex; height: 23px; border-radius: 3px; overflow: hidden; background: #1f1f1f; }
.spin input { flex: 1; min-width: 0; padding-left: 10px; font: 11px/16px "Liberation Mono", monospace; }
.spin-btns { display: flex; flex-direction: column; gap: 1px; }
.spin-btns button { flex: 1; width: 17px; background: #4c4c4c; display: grid; place-items: center; }
.spin-btns svg { width: 12px; height: 8px; fill: none; stroke: #d4d4d4; stroke-width: 2; }

.controls { display: flex; flex-direction: column; gap: 2px; padding: 4px; }
.controls button { height: 22px; border-radius: 3px; background: #4d4d4d; }
.controls .marked { position: relative; }
.marked::after { content: ""; position: absolute; inset: -4px -3px -7px -6px; border: 2px solid #e02024; z-index: 1; }

.status { position: relative; display: flex; justify-content: flex-end; align-items: center; gap: 12px; height: 28px; padding-right: 77px; }
.status-item { display: flex; align-items: center; gap: 7px; }
.status-item + .status-item + .status-item { margin-left: 16px; }
.live { width: 20px; height: 16px; color: #9a9a9a; }
.dot { width: 11px; height: 11px; margin-right: 4px; border-radius: 50%; background: #9a9a9a; }
.watermark { position: absolute; right: 8px; top: 1px; font: 14px/20px "Liberation Sans", "Noto Sans CJK SC", sans-serif; color: #808080; }
```
